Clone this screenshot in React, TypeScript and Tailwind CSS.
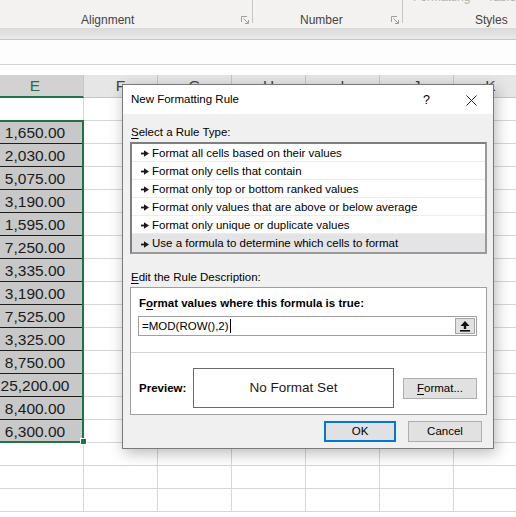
import React from "react";

const values = [
  "1,650.00",
  "2,030.00",
  "5,075.00",
  "3,190.00",
  "1,595.00",
  "7,250.00",
  "3,335.00",
  "3,190.00",
  "7,525.00",
  "3,325.00",
  "8,750.00",
  "25,200.00",
  "8,400.00",
  "6,300.00",
];

const cols = ["F", "G", "H", "I", "J", "K"];

const ruleTypes = [
  "Format all cells based on their values",
  "Format only cells that contain",
  "Format only top or bottom ranked values",
  "Format only values that are above or below average",
  "Format only unique or duplicate values",
  "Use a formula to determine which cells to format",
];

function Launcher() {
  return (
    <svg width="8" height="8" viewBox="0 0 8 8" className="shrink-0">
      <path d="M0.5 6V0.5H6" fill="none" stroke="#a19f9d" strokeWidth="1" />
      <path d="M2.5 2.5L7 7M4 7.5H7.5V4" fill="none" stroke="#a19f9d" strokeWidth="1" />
    </svg>
  );
}

function RuleArrow() {
  return (
    <svg width="8" height="7" viewBox="0 0 8 7" className="shrink-0">
      <rect x="0" y="2.6" width="3.5" height="1.8" fill="#1a1a1a" />
      <polygon points="3,0.3 8,3.5 3,6.7" fill="#1a1a1a" />
    </svg>
  );
}

function GridRow({ value }: { value?: string }) {
  return (
    <div className="flex h-[23px] shrink-0">
      {value ? (
        <div className="w-[96px] shrink-0 flex items-center justify-center pr-px pt-px bg-[#c8c8c8] border-b border-b-[#1e1e1e] border-r border-r-[#d6d6d6] text-[15.5px] text-[#1b1b1b]">
          {value}
        </div>
      ) : (
        <div className="w-[96px] shrink-0 border-b border-r border-[#d6d6d6]" />
      )}
      {cols.map((c) => (
        <div key={c} className="w-[74px] shrink-0 border-b border-r border-[#d6d6d6]" />
      ))}
    </div>
  );
}

export default function App() {
  return (
    <div className="relative w-[516px] h-[517px] overflow-hidden bg-white font-['Liberation_Sans',Arial,sans-serif]">
      {/* ribbon group labels */}
      <div className="flex h-[28px] bg-[#f3f2f1] text-[12px] text-[#444] leading-[15px]">
        <div className="w-[252px] shrink-0 flex items-end pl-[81px] pr-[3px]">
          <span>Alignment</span>
          <span className="ml-auto mb-[4px]">
            <Launcher />
          </span>
        </div>
        <div className="w-px h-[23px] bg-[#c8c6c4] shrink-0" />
        <div className="w-[149px] shrink-0 flex items-end pl-[47px] pr-[3px]">
          <span>Number</span>
          <span className="ml-auto mb-[4px]">
            <Launcher />
          </span>
        </div>
        <div className="w-px h-[23px] bg-[#c8c6c4] shrink-0" />
        <div className="flex-1 flex flex-col pl-[10px]">
          <div className="-mt-[10px] h-[14px] flex gap-[17px] text-[#b3b0ad] whitespace-nowrap">
            <span>Formatting</span>
            <span>Table</span>
          </div>
          <div className="mt-auto pl-[62px] whitespace-nowrap">Styles</div>
        </div>
      </div>

      {/* ribbon shadow */}
      <div className="h-[11px] bg-linear-to-b from-[#d8d8d8] to-[#ebebeb]" />

      {/* formula bar */}
      <div className="h-[26px] bg-[#fdfdfd] border-t border-t-[#c6c6c6] border-b border-b-[#d2d2d2]" />
      <div className="h-[10px] bg-white" />

      {/* grid */}
      <div className="-ml-[12px] flex flex-col">
        <div className="flex h-[23px] shrink-0 text-[15.5px]">
          <div className="w-[96px] shrink-0 flex items-center justify-center pr-px bg-[#d2d2d2] text-[#217346] border-r border-r-[#c6c6c6] border-b-2 border-b-[#217346]">
            E
          </div>
          {cols.map((c) => (
            <div
              key={c}
              className="w-[74px] shrink-0 flex items-center justify-center bg-[#e6e6e6] text-[#444] border-r border-r-[#c6c6c6] border-b border-b-[#c6c6c6]"
            >
              {c}
            </div>
          ))}
        </div>
        <GridRow />
        {values.map((v, i) => (
          <GridRow key={i} value={v} />
        ))}
        <GridRow />
        <GridRow />
        <GridRow />
      </div>

      {/* selection */}
      <div className="absolute left-[-2px] top-[120px] w-[86px] h-[323px] border-2 border-[#217346]" />
      <div className="absolute left-[80px] top-[438px] w-[7px] h-[7px] bg-[#217346] border border-white" />

      {/* dialog */}
      <div className="absolute left-[122px] top-[84px] w-[372px] h-[365px] flex flex-col border border-[#7a7a7a] bg-[#f0f0f0] shadow-[2px_4px_14px_rgba(0,0,0,0.28)] text-[11.5px] text-black">
        <div className="h-[29px] shrink-0 flex items-center pt-px bg-white">
          <span className="pl-[8px]">New Formatting Rule</span>
          <span className="ml-auto text-[12.5px]">?</span>
          <svg width="11" height="11" viewBox="0 0 11 11" className="ml-[36px] mr-[16px]">
            <path d="M0.5 0.5L10.5 10.5M10.5 0.5L0.5 10.5" stroke="#222" strokeWidth="1" />
          </svg>
        </div>

        <div className="flex flex-col pl-[7px] pr-[6px]">
          <div className="mt-[11px] h-[15px] leading-[15px] pl-px">
            <span className="underline underline-offset-2">S</span>elect a Rule Type:
          </div>
          <div className="mt-[2px] flex flex-col border-2 border-t-[#7e7e7e] border-l-[#7e7e7e] border-r-[#9a9a9a] border-b-[#9a9a9a] bg-white">
            {ruleTypes.map((r, i) =>
              i === ruleTypes.length - 1 ? (
                <div key={r} className="h-[18px] flex items-center gap-[3px] pl-[9px] pt-[2px] bg-[#e4e4e6]">
                  <RuleArrow />
                  <span>{r}</span>
                </div>
              ) : (
                <div key={r} className="h-[18px] flex items-center gap-[3px] pl-[9px] pt-[2px] border-b border-[#ececec]">
                  <RuleArrow />
                  <span>{r}</span>
                </div>
              )
            )}
          </div>

          <div className="mt-[16px] h-[15px] leading-[15px] pl-px">
            <span className="underline underline-offset-2">E</span>dit the Rule Description:
          </div>
          <div className="mt-[2px] h-[128px] flex flex-col border border-[#a0a0a0] bg-white">
            <div className="mt-[8px] h-[15px] leading-[15px] pl-[8px] font-bold">
              F<span className="underline underline-offset-2">o</span>rmat values where this formula is true:
            </div>
            <div className="mt-[5px] ml-[7px] mr-[9px] h-[20px] flex items-center border border-[#a0a0a0] bg-white">
              <span className="pl-[3px] pt-px">=MOD(ROW(),2)</span>
              <span className="ml-px w-px h-[14px] bg-black" />
              <div className="ml-auto mr-px w-[20px] h-[16px] flex items-center justify-center border border-[#a6a6a6] bg-[#e1e1e1]">
                <svg width="10" height="11" viewBox="0 0 10 11">
                  <polygon points="5,0 0.5,5 3.8,5 3.8,8 6.2,8 6.2,5 9.5,5" fill="#111" />
                  <rect x="0" y="9" width="10" height="1.6" fill="#111" />
                </svg>
              </div>
            </div>
            <div className="mt-[16px] border-t border-[#d4d4d4]" />
            <div className="mt-[15px] h-[40px] flex items-center">
              <span className="w-[62px] pl-[8px] pt-px font-bold shrink-0">Preview:</span>
              <div className="w-[201px] h-[40px] flex items-center justify-center pt-px border border-[#6a6a6a] bg-white text-[13.5px] text-[#1a1a1a]">
                No Format Set
              </div>
              <div className="ml-[9px] w-[74px] h-[21px] flex items-center justify-center pt-px border border-[#adadad] bg-[#e1e1e1]">
                <span>
                  <span className="underline underline-offset-2">F</span>ormat...
                </span>
              </div>
            </div>
          </div>

          <div className="mt-[6px] flex justify-end gap-[12px] pr-[5px]">
            <div className="w-[72px] h-[21px] flex items-center justify-center pt-px border-2 border-[#0078d7] bg-[#e1e1e1]">
              OK
            </div>
            <div className="w-[74px] h-[21px] flex items-center justify-center pt-px border border-[#adadad] bg-[#e1e1e1]">
              Cancel
            </div>
          </div>
        </div>
      </div>
    </div>
  );
}
